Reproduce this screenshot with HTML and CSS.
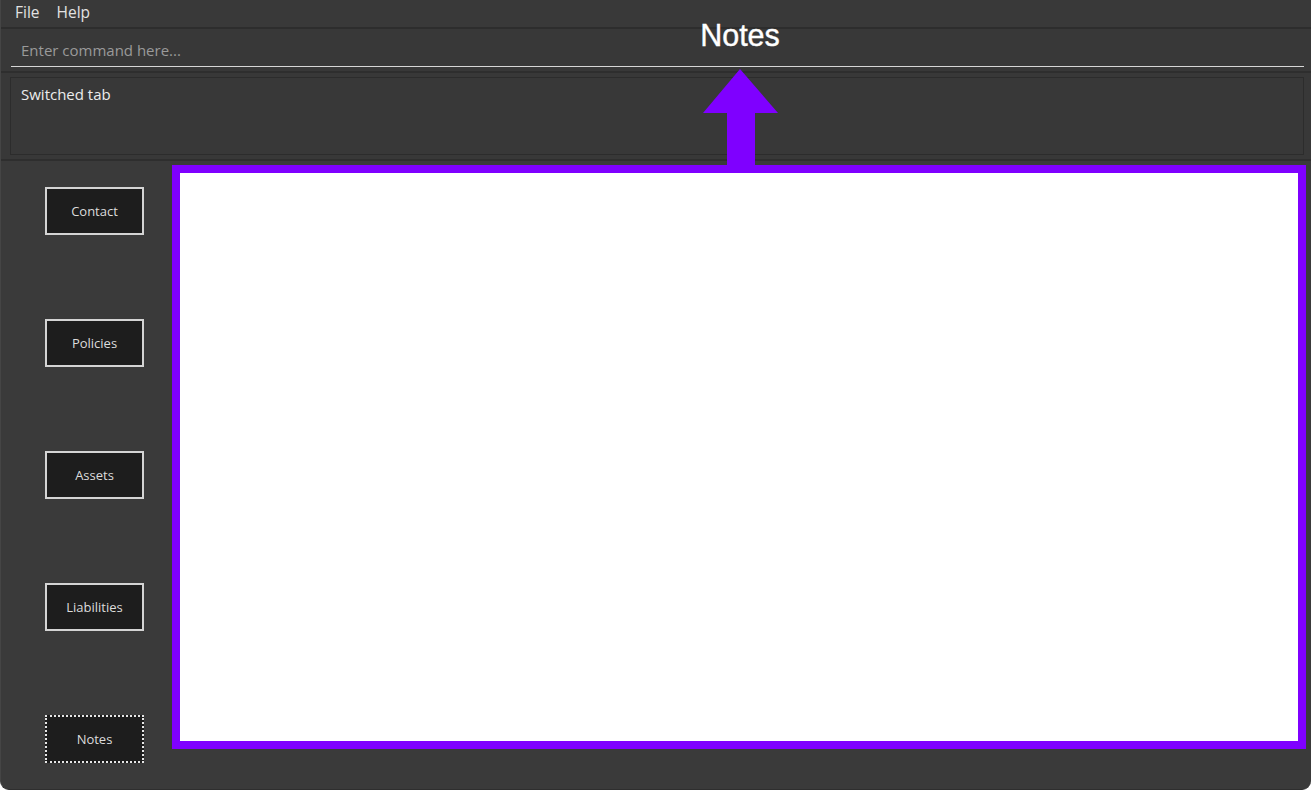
FILE: index.html
```html
<!DOCTYPE html>
<html>
<head>
<meta charset="utf-8">
<link rel="stylesheet" href="styles.css">
</head>
<body>
<div class="window">
  <div class="menubar">
    <span class="menu-item">File</span>
    <span class="menu-item">Help</span>
  </div>
  <div class="command-row">
    <div class="command-field">Enter command here...</div>
  </div>
  <div class="result-row">
    <div class="result-box">Switched tab</div>
  </div>
  <div class="main">
    <div class="sidebar">
      <div class="tab-btn">Contact</div>
      <div class="tab-btn">Policies</div>
      <div class="tab-btn">Assets</div>
      <div class="tab-btn">Liabilities</div>
      <div class="tab-btn focused">Notes</div>
    </div>
    <div class="panel"></div>
  </div>
  <div class="annotation">
    <div class="annotation-label">Notes</div>
    <svg class="annotation-arrow" width="76" height="97" viewBox="0 0 76 97">
      <polygon points="37,0 75,44 52,44 52,97 24,97 24,44 0,44" fill="#7f00ff"/>
    </svg>
  </div>
</div>
</body>
</html>
```

FILE: styles.css
```css
html, body {
  margin: 0;
  padding: 0;
  background: #ffffff;
}
body {
  font-family: "Open Sans", "Noto Sans", sans-serif;
}
.window {
  position: relative;
  width: 1311px;
  height: 790px;
  background: #3a3a3a;
  border-radius: 0 0 9px 9px;
  border-left: 1px solid #454545;
  border-bottom: 1px solid #2e2e2e;
  box-sizing: border-box;
  overflow: hidden;
  display: flex;
  flex-direction: column;
}
.menubar {
  height: 27px;
  background: #393939;
  border-bottom: 2px solid #2d2d2d;
  display: flex;
  align-items: flex-start;
  padding-left: 14px;
  padding-top: 2px;
  box-sizing: border-box;
  height: 29px;
  gap: 17px;
}
.menu-item {
  color: #e2e2e2;
  font-size: 15.5px;
  line-height: 20px;
}
.command-row {
  height: 44px;
  box-sizing: border-box;
  background: #383838;
  border-bottom: 2px solid #2e2e2e;
  padding: 0 7px 0 10px;
  display: flex;
  align-items: flex-start;
}
.command-field {
  flex: 1;
  height: 38px;
  border-bottom: 1px solid #d6d6d6;
  box-sizing: border-box;
  color: #9a9a9a;
  font-size: 15px;
  line-height: 20px;
  padding: 11px 0 0 10px;
}
.result-row {
  height: 88px;
  background: #383838;
  border-bottom: 2px solid #2e2e2e;
  padding: 4px 7px 0 9px;
  box-sizing: border-box;
}
.result-box {
  height: 78px;
  border: 1px solid #2c2c2c;
  box-sizing: border-box;
  color: #ececec;
  font-size: 15px;
  line-height: 20px;
  padding: 6px 10px;
}
.main {
  flex: 1;
  display: flex;
  padding-top: 4px;
}
.sidebar {
  width: 171px;
  display: flex;
  flex-direction: column;
  padding: 22px 0 0 44px;
  box-sizing: border-box;
  gap: 84px;
}
.tab-btn {
  width: 99px;
  height: 48px;
  box-sizing: border-box;
  border: 2px solid #d4d4d4;
  background: #1d1d1d;
  color: #dcdcdc;
  font-size: 13px;
  display: flex;
  align-items: center;
  justify-content: center;
}
.tab-btn.focused {
  border: 2px dotted #e6e6e6;
}
.panel {
  width: 1134px;
  height: 584px;
  box-sizing: border-box;
  border: 8px solid #7f00ff;
  background: #ffffff;
}
.annotation {
  position: absolute;
  left: 699px;
  top: 17px;
  width: 80px;
  display: flex;
  flex-direction: column;
  align-items: center;
}
.annotation-label {
  font-family: "Liberation Sans", Arial, sans-serif;
  font-size: 30.5px;
  line-height: 36px;
  color: #ffffff;
  -webkit-text-stroke: 0.4px #ffffff;
}
.annotation-arrow {
  display: block;
  margin-top: 16px;
  margin-left: 1px;
}
```
